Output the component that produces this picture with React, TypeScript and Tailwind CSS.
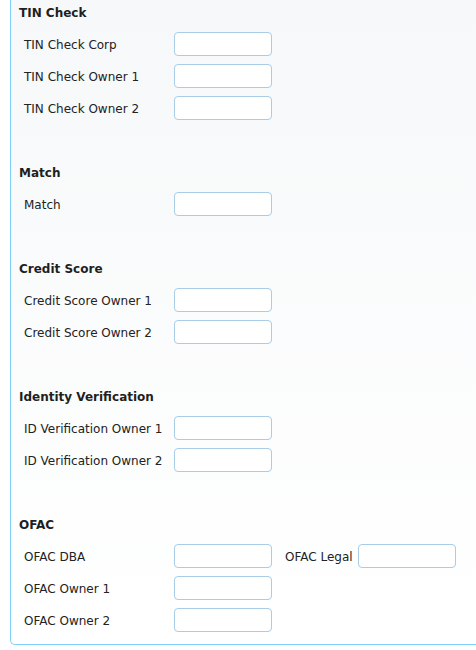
const sections: { title: string; rows: string[] }[] = [
  { title: 'TIN Check', rows: ['TIN Check Corp', 'TIN Check Owner 1', 'TIN Check Owner 2'] },
  { title: 'Match', rows: ['Match'] },
  { title: 'Credit Score', rows: ['Credit Score Owner 1', 'Credit Score Owner 2'] },
  { title: 'Identity Verification', rows: ['ID Verification Owner 1', 'ID Verification Owner 2'] },
];

const ofacRows = ['OFAC DBA', 'OFAC Owner 1', 'OFAC Owner 2'];

function Field() {
  return (
    <input
      type="text"
      className="h-6 w-[98px] shrink-0 rounded-[4px] border border-[#a9cde6] bg-white outline-none"
    />
  );
}

function Row({ label, children }: { label: string; children?: React.ReactNode }) {
  return (
    <div className="flex h-6 items-center">
      <span className="w-[163px] shrink-0 whitespace-nowrap pt-[2px] pl-[13px]">{label}</span>
      <Field />
      {children}
    </div>
  );
}

export default function App() {
  return (
    <div className="min-h-[650px] bg-white" style={{ fontFamily: '"DejaVu Sans", Verdana, sans-serif' }}>
      <div className="ml-[10px] rounded-bl-[5px] border-b border-l border-[#7fd0f7] bg-gradient-to-b from-[#f6f8f9] to-white pt-[3px] pb-[12px] text-[12px] text-[#222]">
        {sections.map((section) => (
          <div key={section.title} className="mb-[43px]">
            <h3 className="mb-[9px] h-5 pl-[8px] text-[12px] leading-5 font-bold text-[#1f1f1f]">
              {section.title}
            </h3>
            <div className="flex flex-col gap-2">
              {section.rows.map((row) => (
                <Row key={row} label={row} />
              ))}
            </div>
          </div>
        ))}

        {/* OFAC */}
        <div>
          <h3 className="mb-[9px] h-5 pl-[8px] text-[12px] leading-5 font-bold text-[#1f1f1f]">OFAC</h3>
          <div className="flex flex-col gap-2">
            {ofacRows.map((row, i) => (
              <Row key={row} label={row}>
                {i === 0 && (
                  <>
                    <span className="ml-[13px] mr-[5px] whitespace-nowrap pt-[2px]">OFAC Legal</span>
                    <Field />
                  </>
                )}
              </Row>
            ))}
          </div>
        </div>
      </div>
    </div>
  );
}
